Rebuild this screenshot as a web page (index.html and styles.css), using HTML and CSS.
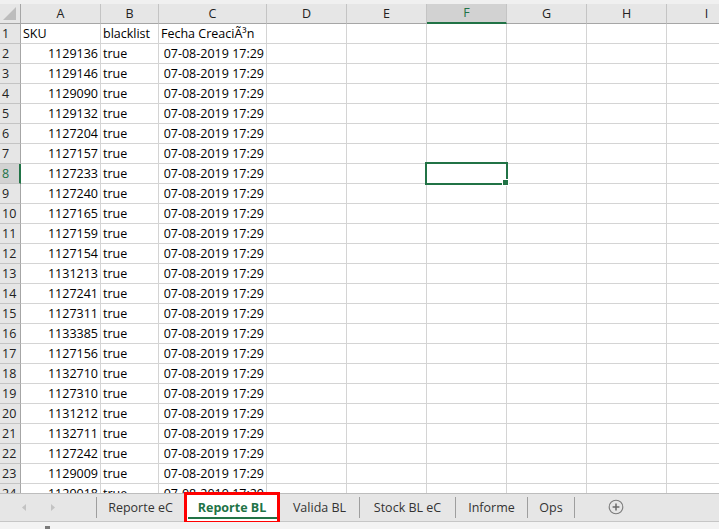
FILE: index.html
```html
<!DOCTYPE html>
<html lang="es">
<head>
<meta charset="utf-8">
<title>Reporte BL</title>
<link rel="stylesheet" href="styles.css">
</head>
<body>
<div class="app">
  <div class="sheet">
    <div class="topgap"></div>
    <div class="row head">
      <div class="c corner"><svg width="14" height="14" viewBox="0 0 14 14"><polygon points="13,0 13,13 0,13" fill="#bdbdbd"/></svg></div>
      <div class="c">A</div><div class="c">B</div><div class="c">C</div><div class="c">D</div><div class="c">E</div><div class="c selcol">F</div><div class="c">G</div><div class="c">H</div><div class="c">I</div>
    </div>
    <div class="row"><div class="c rh">1</div><div class="c">SKU</div><div class="c">blacklist</div><div class="c">Fecha CreaciÃ³n</div><div class="c"></div><div class="c"></div><div class="c"></div><div class="c"></div><div class="c"></div><div class="c"></div></div>
    <div class="row"><div class="c rh">2</div><div class="c num">1129136</div><div class="c">true</div><div class="c num">07-08-2019 17:29</div><div class="c"></div><div class="c"></div><div class="c"></div><div class="c"></div><div class="c"></div><div class="c"></div></div>
    <div class="row"><div class="c rh">3</div><div class="c num">1129146</div><div class="c">true</div><div class="c num">07-08-2019 17:29</div><div class="c"></div><div class="c"></div><div class="c"></div><div class="c"></div><div class="c"></div><div class="c"></div></div>
    <div class="row"><div class="c rh">4</div><div class="c num">1129090</div><div class="c">true</div><div class="c num">07-08-2019 17:29</div><div class="c"></div><div class="c"></div><div class="c"></div><div class="c"></div><div class="c"></div><div class="c"></div></div>
    <div class="row"><div class="c rh">5</div><div class="c num">1129132</div><div class="c">true</div><div class="c num">07-08-2019 17:29</div><div class="c"></div><div class="c"></div><div class="c"></div><div class="c"></div><div class="c"></div><div class="c"></div></div>
    <div class="row"><div class="c rh">6</div><div class="c num">1127204</div><div class="c">true</div><div class="c num">07-08-2019 17:29</div><div class="c"></div><div class="c"></div><div class="c"></div><div class="c"></div><div class="c"></div><div class="c"></div></div>
    <div class="row"><div class="c rh">7</div><div class="c num">1127157</div><div class="c">true</div><div class="c num">07-08-2019 17:29</div><div class="c"></div><div class="c"></div><div class="c"></div><div class="c"></div><div class="c"></div><div class="c"></div></div>
    <div class="row"><div class="c rh selrow">8</div><div class="c num">1127233</div><div class="c">true</div><div class="c num">07-08-2019 17:29</div><div class="c"></div><div class="c"></div><div class="c active-cell"><span class="handle"></span></div><div class="c"></div><div class="c"></div><div class="c"></div></div>
    <div class="row"><div class="c rh">9</div><div class="c num">1127240</div><div class="c">true</div><div class="c num">07-08-2019 17:29</div><div class="c"></div><div class="c"></div><div class="c"></div><div class="c"></div><div class="c"></div><div class="c"></div></div>
    <div class="row"><div class="c rh">10</div><div class="c num">1127165</div><div class="c">true</div><div class="c num">07-08-2019 17:29</div><div class="c"></div><div class="c"></div><div class="c"></div><div class="c"></div><div class="c"></div><div class="c"></div></div>
    <div class="row"><div class="c rh">11</div><div class="c num">1127159</div><div class="c">true</div><div class="c num">07-08-2019 17:29</div><div class="c"></div><div class="c"></div><div class="c"></div><div class="c"></div><div class="c"></div><div class="c"></div></div>
    <div class="row"><div class="c rh">12</div><div class="c num">1127154</div><div class="c">true</div><div class="c num">07-08-2019 17:29</div><div class="c"></div><div class="c"></div><div class="c"></div><div class="c"></div><div class="c"></div><div class="c"></div></div>
    <div class="row"><div class="c rh">13</div><div class="c num">1131213</div><div class="c">true</div><div class="c num">07-08-2019 17:29</div><div class="c"></div><div class="c"></div><div class="c"></div><div class="c"></div><div class="c"></div><div class="c"></div></div>
    <div class="row"><div class="c rh">14</div><div class="c num">1127241</div><div class="c">true</div><div class="c num">07-08-2019 17:29</div><div class="c"></div><div class="c"></div><div class="c"></div><div class="c"></div><div class="c"></div><div class="c"></div></div>
    <div class="row"><div class="c rh">15</div><div class="c num">1127311</div><div class="c">true</div><div class="c num">07-08-2019 17:29</div><div class="c"></div><div class="c"></div><div class="c"></div><div class="c"></div><div class="c"></div><div class="c"></div></div>
    <div class="row"><div class="c rh">16</div><div class="c num">1133385</div><div class="c">true</div><div class="c num">07-08-2019 17:29</div><div class="c"></div><div class="c"></div><div class="c"></div><div class="c"></div><div class="c"></div><div class="c"></div></div>
    <div class="row"><div class="c rh">17</div><div class="c num">1127156</div><div class="c">true</div><div class="c num">07-08-2019 17:29</div><div class="c"></div><div class="c"></div><div class="c"></div><div class="c"></div><div class="c"></div><div class="c"></div></div>
    <div class="row"><div class="c rh">18</div><div class="c num">1132710</div><div class="c">true</div><div class="c num">07-08-2019 17:29</div><div class="c"></div><div class="c"></div><div class="c"></div><div class="c"></div><div class="c"></div><div class="c"></div></div>
    <div class="row"><div class="c rh">19</div><div class="c num">1127310</div><div class="c">true</div><div class="c num">07-08-2019 17:29</div><div class="c"></div><div class="c"></div><div class="c"></div><div class="c"></div><div class="c"></div><div class="c"></div></div>
    <div class="row"><div class="c rh">20</div><div class="c num">1131212</div><div class="c">true</div><div class="c num">07-08-2019 17:29</div><div class="c"></div><div class="c"></div><div class="c"></div><div class="c"></div><div class="c"></div><div class="c"></div></div>
    <div class="row"><div class="c rh">21</div><div class="c num">1132711</div><div class="c">true</div><div class="c num">07-08-2019 17:29</div><div class="c"></div><div class="c"></div><div class="c"></div><div class="c"></div><div class="c"></div><div class="c"></div></div>
    <div class="row"><div class="c rh">22</div><div class="c num">1127242</div><div class="c">true</div><div class="c num">07-08-2019 17:29</div><div class="c"></div><div class="c"></div><div class="c"></div><div class="c"></div><div class="c"></div><div class="c"></div></div>
    <div class="row"><div class="c rh">23</div><div class="c num">1129009</div><div class="c">true</div><div class="c num">07-08-2019 17:29</div><div class="c"></div><div class="c"></div><div class="c"></div><div class="c"></div><div class="c"></div><div class="c"></div></div>
    <div class="row"><div class="c rh">24</div><div class="c num">1129018</div><div class="c">true</div><div class="c num">07-08-2019 17:29</div><div class="c"></div><div class="c"></div><div class="c"></div><div class="c"></div><div class="c"></div><div class="c"></div></div>
  </div>
  <div class="tabs">
    <div class="nav">
      <svg width="96" height="27" viewBox="0 0 96 27"><polygon points="26,10 26,17 22,13.5" fill="#c3c3c3"/><polygon points="51,10 51,17 55,13.5" fill="#c3c3c3"/></svg>
    </div>
    <div class="sep"></div>
    <div class="tab w-rec">Reporte eC</div>
    <div class="tab active">Reporte BL</div>
    <div class="tab w-val">Valida BL</div>
    <div class="sep"></div>
    <div class="tab w-stock">Stock BL eC</div>
    <div class="sep"></div>
    <div class="tab w-inf">Informe</div>
    <div class="sep"></div>
    <div class="tab w-ops">Ops</div>
    <div class="sep"></div>
    <div class="add">
      <svg width="16" height="16" viewBox="0 0 16 16"><circle cx="8" cy="8" r="6.8" fill="none" stroke="#7a7a7a" stroke-width="1.1"/><path d="M8 4.6v6.8M4.6 8h6.8" stroke="#6a6a6a" stroke-width="1.5"/></svg>
    </div>
  </div>
  <div class="status"><span class="mark"></span></div>
</div>
</body>
</html>
```
FILE: styles.css
```css
html, body {
  margin: 0;
  padding: 0;
}
body {
  width: 719px;
  height: 529px;
  overflow: hidden;
  background: #ffffff;
  font-family: "Open Sans", "Noto Sans", sans-serif;
  font-size: 12.5px;
  color: #000;
}
.app {
  display: flex;
  flex-direction: column;
  height: 529px;
}
.sheet {
  height: 493px;
  overflow: hidden;
  background: #fff;
  flex: none;
}
.topgap {
  height: 4px;
  background: #f0f0f0;
}
.row {
  display: grid;
  grid-template-columns: 21px 80px 58px 108px repeat(6, 80px);
  height: 20px;
}
.c {
  box-sizing: border-box;
  height: 20px;
  border-right: 1px solid #d4d4d4;
  border-bottom: 1px solid #d4d4d4;
  padding: 0 2px;
  line-height: 19px;
  white-space: nowrap;
  overflow: visible;
}
.c.num {
  text-align: right;
}
.head .c {
  background: #e6e6e6;
  border-right-color: #c4c4c4;
  border-bottom-color: #a6a6a6;
  text-align: center;
  color: #222;
}
.head .corner {
  border-right-color: #a6a6a6;
  display: flex;
  align-items: flex-end;
  justify-content: flex-end;
  padding: 0 3px 2px 0;
}
.head .corner svg {
  display: block;
}
.head .selcol {
  background: #d2d2d2;
  border-bottom: 2px solid #217346;
  color: #217346;
  line-height: 18px;
}
.c.rh {
  background: #e6e6e6;
  border-right-color: #a6a6a6;
  border-bottom-color: #c4c4c4;
  padding: 0 0 0 2px;
  color: #222;
  overflow: hidden;
}
.c.rh.selrow {
  background: #d2d2d2;
  border-right: 2px solid #217346;
  color: #217346;
}
.active-cell {
  position: relative;
}
.active-cell::after {
  content: "";
  position: absolute;
  left: -2px;
  top: -2px;
  width: 83px;
  height: 23px;
  box-sizing: border-box;
  border: 2px solid #217346;
}
.handle {
  position: absolute;
  right: -3px;
  bottom: -3px;
  width: 5px;
  height: 5px;
  background: #217346;
  border: 1px solid #fff;
  z-index: 2;
}
.tabs {
  flex: none;
  height: 27px;
  display: flex;
  align-items: stretch;
  background: #e6e6e6;
  border-top: 1px solid #bdbdbd;
  border-bottom: 1px solid #c6c6c6;
  font-size: 12.5px;
  color: #333;
}
.nav {
  width: 96px;
  flex: none;
}
.nav svg {
  display: block;
}
.sep {
  width: 1px;
  flex: none;
  background: #9e9e9e;
  margin: 3px 0 3px;
}
.tab {
  flex: none;
  display: flex;
  align-items: center;
  justify-content: center;
  white-space: nowrap;
  padding-bottom: 1px;
  box-sizing: border-box;
}
.w-rec { width: 87px; }
.w-val { width: 79px; }
.w-stock { width: 95px; }
.w-inf { width: 71px; }
.w-ops { width: 46px; }
.tab.active {
  width: 96px;
  position: relative;
  background: #fff;
  color: #217346;
  font-weight: 700;
}
.tab.active::before {
  content: "";
  position: absolute;
  left: 4px;
  right: 3px;
  bottom: 2px;
  height: 2px;
  background: #217346;
}
.tab.active::after {
  content: "";
  position: absolute;
  left: 0;
  right: 0;
  top: -2px;
  bottom: -3px;
  border: 3px solid #ff0000;
}
.add {
  flex: none;
  display: flex;
  align-items: center;
  margin-left: 33px;
  padding-bottom: 1px;
}
.add svg {
  display: block;
}
.status {
  flex: 1;
  background: #f3f3f3;
  position: relative;
}
.mark {
  display: block;
  margin: 4px 0 0 45px;
  width: 5px;
  height: 3px;
  background: #7a7a7a;
}
```
